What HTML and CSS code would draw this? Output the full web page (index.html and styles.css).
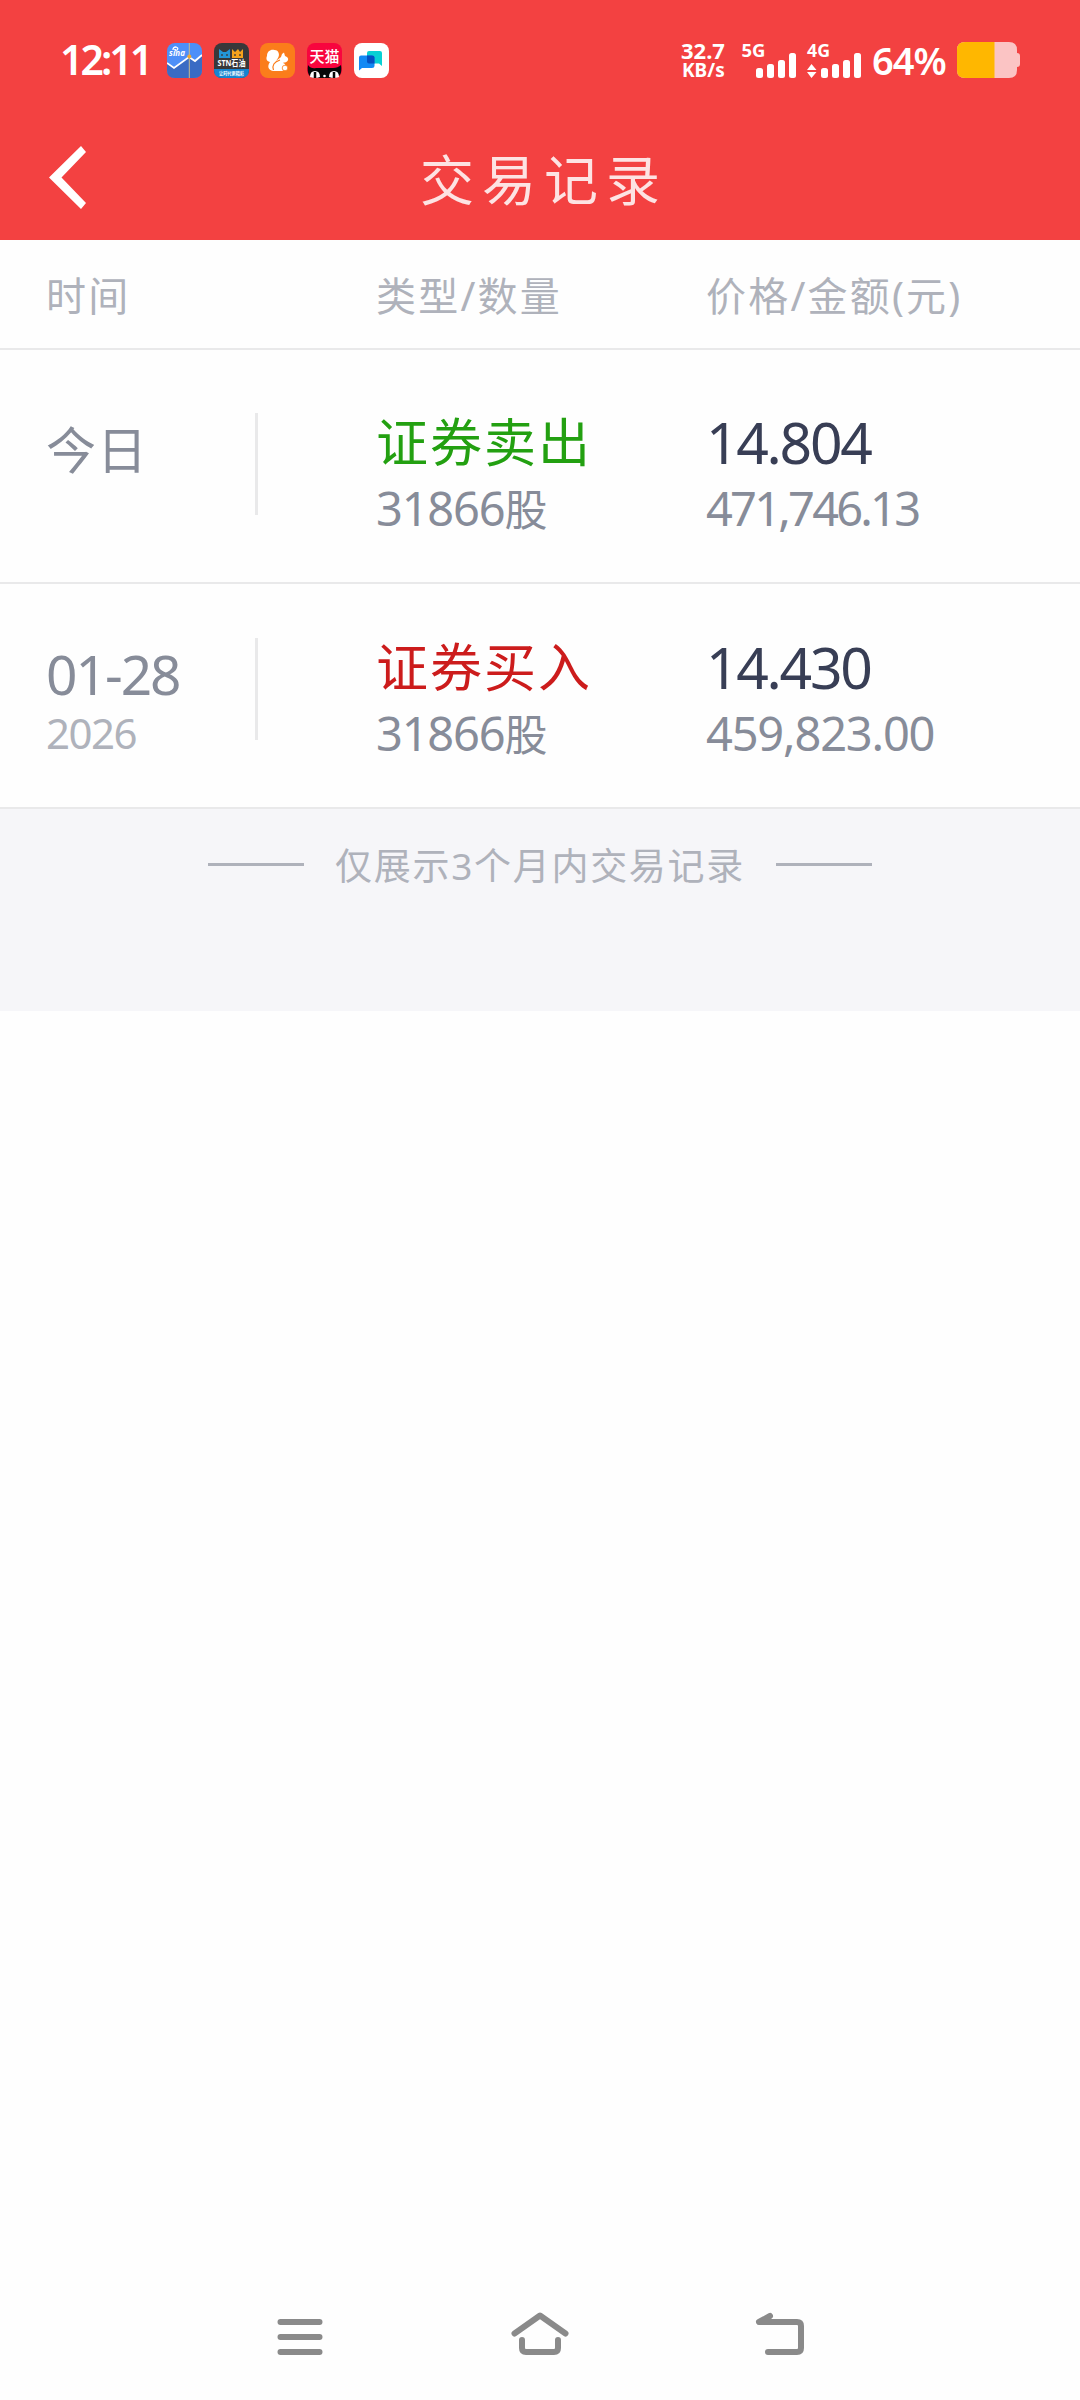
FILE: index.html
```html
<!DOCTYPE html>
<html lang="zh-CN">
<head>
  <meta charset="UTF-8">
  <title>交易记录</title>
  <link rel="stylesheet" href="styles.css">
</head>
<body>

<header class="top">
  <div class="status-bar">
    <span class="clock">12:11</span>
    <div class="apps">
      <svg class="app" viewBox="0 0 35 35">
        <rect width="35" height="35" rx="8" fill="#4d8ff8"/>
        <path d="M0 20L7 25L22 14L28 18L35 13V27Q35 35 27 35H8Q0 35 0 27Z" fill="#3a6bc4"/>
        <path d="M0 20L7 25L22 14L28 18L35 12" fill="none" stroke="#fff" stroke-width="1.8"/>
        <path d="M22.300 0V35" stroke="#c9b98c" stroke-width="1"/>
        <circle cx="22.300" cy="13.500" r="2" fill="#f0a830"/>
        <path d="M6 7Q6 4 9 4Q12 5 10 7Q8 8 8 6" fill="none" stroke="#fff" stroke-width="1.300"/>
        <text x="2" y="13" font-size="8" class="logo-italic" textLength="16">sina</text>
      </svg>
      <svg class="app" viewBox="0 0 35 35">
        <rect width="35" height="35" rx="8" fill="#38383a"/>
        <path d="M0 26H35V27Q35 35 27 35H8Q0 35 0 27Z" fill="#1684d0"/>
        <path d="M5 6L9 9H12L16 6V15H5Z" fill="#2396d8"/>
        <path d="M18 6L21 9L24 6L26 9L29 6V15H18Z" fill="#f5a21c"/>
        <path d="M8 11V13M13 11V13M21 11V13M26 11V13" stroke="#38383a" stroke-width="1.300"/>
        <text x="3.500" y="23" font-size="8" class="logo" textLength="28" lengthAdjust="spacingAndGlyphs">STN石油</text>
        <text x="5" y="32" font-size="5" class="logo" textLength="25" lengthAdjust="spacingAndGlyphs">让时代更精彩</text>
      </svg>
      <svg class="app" viewBox="0 0 35 35">
        <rect width="35" height="35" rx="8" fill="#fb7d1b"/>
        <path d="M13 28C8 27 7 23 10 19C6 18 6 15 7 13C7 8 11 6 14.500 7C19 7 20 12 18 15L16 18C18 16 20 15 21 14L22 11L24 9.500L25 13C28 14 29 16 27.500 18C26 20 24 19 23 20C27 21 26 27 22 28Z" fill="#fff"/>
        <path d="M13.500 27Q11 20 20 17" fill="none" stroke="#fb7d1b" stroke-width="1.200"/>
        <circle cx="25" cy="25" r="2.800" fill="#fff" stroke="#fb7d1b" stroke-width=".8"/>
      </svg>
      <svg class="app" viewBox="0 0 35 35">
        <rect width="35" height="35" rx="8" fill="#f8053e"/>
        <path d="M1 22Q4 26 9 25H26Q31 25 34 22Q35 28 33 32Q30 35 27 35H8Q4 35 2 32Q0 28 1 22Z" fill="#080808"/>
        <path d="M3 34Q3 28 8 28Q13 28 13 34Q8 36 3 34ZM22 34Q22 28 27 28Q32 28 32 34Q27 36 22 34Z" fill="#fff"/>
        <path d="M8 29V35M27 29V35" stroke="#080808" stroke-width="2.500"/>
        <circle cx="17.500" cy="33" r="1.300" fill="#fff"/>
        <text x="2.500" y="18.500" font-size="15" class="logo-thin" textLength="30" lengthAdjust="spacingAndGlyphs">天猫</text>
      </svg>
      <svg class="app" viewBox="0 0 35 35">
        <rect width="35" height="35" rx="8" fill="#fff"/>
        <path d="M15 8H26Q28 8 28 10V23L25 20.500H15Q13 20.500 13 18.500V10Q13 8 15 8Z" fill="#08d0d4"/>
        <path d="M7 12.500H18Q20.500 12.500 20.500 14.500V23Q20.500 25 18 25H8L5 27.500V14.500Q5 12.500 7 12.500Z" fill="#1289f4"/>
        <path d="M13 12.500H18Q20.500 12.500 20.500 14.500V20.500H15Q13 20.500 13 18.500Z" fill="#0551c2"/>
      </svg>
    </div>
    <div class="speed">
      <span>32.7</span>
      <span class="unit">KB/s</span>
    </div>
    <svg class="signal signal-5g" viewBox="0 0 55 40">
      <text x="-.5" y="16.500" font-size="18" class="logo" textLength="24" lengthAdjust="spacingAndGlyphs">5G</text>
      <g fill="#fff">
        <rect x="14" y="28" width="7" height="10" rx="2.500"/>
        <rect x="25" y="24" width="7" height="14" rx="2.500"/>
        <rect x="36" y="20" width="7" height="18" rx="2.500"/>
        <rect x="47" y="13" width="7" height="25" rx="2.500"/>
      </g>
    </svg>
    <svg class="signal" viewBox="0 0 55 40">
      <text x="0" y="16.500" font-size="18" class="logo" textLength="23" lengthAdjust="spacingAndGlyphs">4G</text>
      <g fill="#fff">
        <path d="M4.500 24L9.500 30H0ZM0 32H9.500L4.500 38Z"/>
        <rect x="14" y="28" width="7" height="10" rx="2.500"/>
        <rect x="25" y="24" width="7" height="14" rx="2.500"/>
        <rect x="36" y="20" width="7" height="18" rx="2.500"/>
        <rect x="47" y="13" width="7" height="25" rx="2.500"/>
      </g>
    </svg>
    <span class="percent">64%</span>
    <svg class="battery" viewBox="0 0 63 36">
      <path d="M8 0H52Q60 0 60 8V11Q63 11 63 14V22Q63 25 60 25V28Q60 36 52 36H8Q0 36 0 28V8Q0 0 8 0Z" fill="#fbc4c4"/>
      <path d="M8 0H37.500V36H8Q0 36 0 28V8Q0 0 8 0Z" fill="#ffb700"/>
    </svg>
  </div>

  <div class="nav">
    <svg class="back" viewBox="0 0 37 63">
      <path d="M32 0L37 6L12.500 31.500L37 57L32 63L0 31.500Z" fill="#fff"/>
    </svg>
    <h1 class="title">交易记录</h1>
  </div>
</header>

<main>
  <div class="grid table-head">
    <span>时间</span>
    <span>类型/数量</span>
    <span>价格/金额(元)</span>
  </div>

  <div class="grid record record-today">
    <div class="date">
      <p class="day today">今日</p>
    </div>
    <div class="type">
      <p class="action sell">证券卖出</p>
      <p class="count">31866<span class="share">股</span></p>
    </div>
    <div class="money">
      <p class="price">14.804</p>
      <p class="amount amount-tight">471,746.13</p>
    </div>
  </div>

  <div class="grid record">
    <div class="date">
      <p class="day">01-28</p>
      <p class="year">2026</p>
    </div>
    <div class="type">
      <p class="action buy">证券买入</p>
      <p class="count">31866<span class="share">股</span></p>
    </div>
    <div class="money">
      <p class="price">14.430</p>
      <p class="amount">459,823.00</p>
    </div>
  </div>

  <div class="notice">
    <span class="line"></span>
    <span class="notice-text">仅展示3个月内交易记录</span>
    <span class="line"></span>
  </div>
</main>

<footer class="system-nav">
  <svg viewBox="0 0 60 48" fill="none" stroke="#8a8a8a" stroke-width="6" stroke-linecap="round">
    <path d="M10.500 12H49.500M10.500 27H49.500M10.500 42H49.500"/>
  </svg>
  <svg viewBox="0 0 60 48" fill="none" stroke="#8a8a8a" stroke-width="6" stroke-linecap="round" stroke-linejoin="round">
    <path d="M4.500 23.500L30 5.500L55.500 23.500"/>
    <path d="M12 30V38Q12 42 16 42H44Q48 42 48 38V30"/>
  </svg>
  <svg viewBox="0 0 60 48" fill="none" stroke="#8a8a8a" stroke-width="6" stroke-linecap="round" stroke-linejoin="round">
    <path d="M20 6L9 12H47Q51 12 51 16V38Q51 42 47 42H18"/>
  </svg>
</footer>

</body>
</html>
```

FILE: styles.css
```css
* {
  box-sizing: border-box;
  margin: 0;
  padding: 0;
}

body {
  display: flex;
  flex-direction: column;
  height: 2400px;
  font-family: "Noto Sans", "Noto Sans CJK SC", sans-serif;
  background: #fefefe;
  color: #878c99;
}

svg {
  display: block;
  flex: none;
}

.top {
  height: 240px;
  background: #f34141;
  color: #fff;
}

.status-bar {
  display: flex;
  align-items: center;
  height: 120px;
  padding-left: 60px;
}

.clock {
  width: 107px;
  margin-top: -3px;
  font-size: 41px;
  font-weight: 600;
  letter-spacing: -3px;
}

.apps {
  display: flex;
  gap: 11.7px;
  width: 514px;
}

.app {
  width: 35px;
  height: 35px;
}

.logo,
.logo-italic,
.logo-thin {
  fill: #fff;
  font-weight: 700;
}

.logo-italic {
  font-style: italic;
}

.logo-thin {
  font-weight: 500;
}

.speed {
  display: flex;
  flex-direction: column;
  width: 61px;
  font-size: 22px;
  font-weight: 700;
  line-height: 20px;
}

.unit {
  padding-left: 1px;
  font-size: 19px;
}

.signal {
  width: 55px;
  height: 40px;
  overflow: visible;
}

.signal-5g {
  margin-right: 10px;
}

.percent {
  width: 95px;
  padding-left: 10px;
  font-size: 38px;
  font-weight: 600;
  letter-spacing: -1px;
}

.battery {
  width: 63px;
  height: 36px;
}

.nav {
  display: grid;
  grid-template-columns: 86px 1fr 86px;
  align-items: center;
  height: 120px;
}

.back {
  width: 37px;
  height: 63px;
  margin: -6px 0 0 49px;
}

.title {
  margin-top: -5px;
  padding-left: 8px;
  color: #fde3e3;
  font-size: 54px;
  font-weight: 400;
  letter-spacing: 8px;
  text-align: center;
}

.grid {
  display: grid;
  grid-template-columns: 330px 330px 1fr;
  padding-left: 46px;
  border-bottom: 2px solid #e9e9ea;
}

.table-head {
  height: 110px;
  color: #afb2bb;
  font-size: 40px;
  line-height: 111px;
  letter-spacing: 2.2px;
}

.record {
  padding-top: 53px;
  padding-bottom: 38px;
}

.record-today {
  padding-top: 62px;
}

.date {
  width: 212px;
  height: 102px;
  margin-top: 1px;
  padding-top: 6px;
  border-right: 3px solid #e9e9ea;
}

.day {
  font-size: 55px;
  line-height: 60px;
  letter-spacing: -2px;
}

.today {
  font-size: 50px;
  line-height: 62px;
  letter-spacing: 1px;
}

.year {
  color: #afb2bb;
  font-size: 42px;
  line-height: 58px;
  letter-spacing: -1.5px;
}

.action {
  height: 60px;
  font-size: 52px;
  line-height: 60px;
  letter-spacing: 2px;
}

.sell {
  color: #23a011;
}

.buy {
  color: #cc1c1c;
}

.count,
.amount {
  height: 72px;
  font-size: 47px;
  line-height: 72px;
  letter-spacing: -1.2px;
}

.amount-tight {
  letter-spacing: -2.8px;
}

.share {
  font-size: 43px;
  line-height: 1;
}

.price {
  color: #383e55;
  font-size: 57px;
  line-height: 60px;
  letter-spacing: -2.3px;
}

.notice {
  display: flex;
  justify-content: center;
  gap: 31px;
  height: 202px;
  padding-top: 35px;
  background: #f6f6f9;
}

.line {
  width: 96px;
  height: 3px;
  margin-top: 19px;
  background: #afb2bb;
}

.notice-text {
  color: #afb2bb;
  font-size: 37px;
  line-height: 44px;
  letter-spacing: 1.7px;
}

.system-nav {
  display: flex;
  justify-content: center;
  gap: 180px;
  margin-top: auto;
  padding-bottom: 42px;
}

.system-nav svg {
  width: 60px;
  height: 48px;
}
```
